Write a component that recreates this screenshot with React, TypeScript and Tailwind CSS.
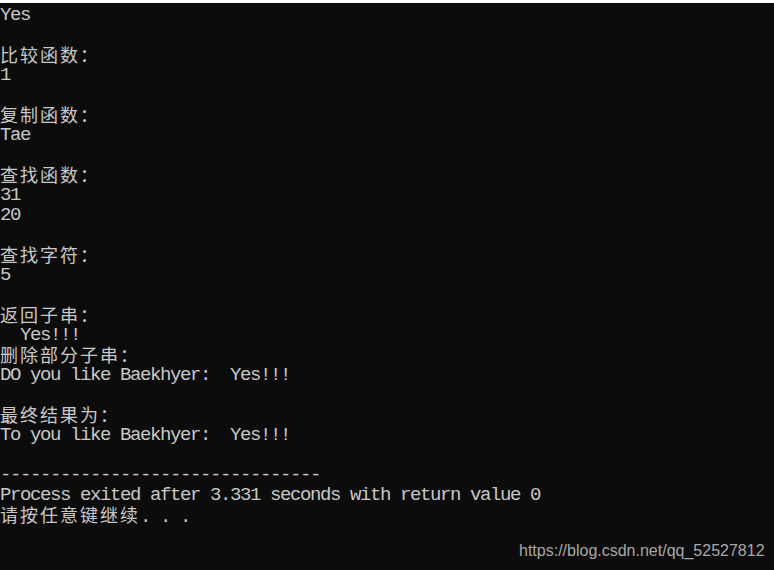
const lines = [
  'Yes',
  '',
  '比较函数：',
  '1',
  '',
  '复制函数：',
  'Tae',
  '',
  '查找函数：',
  '31',
  '20',
  '',
  '查找字符：',
  '5',
  '',
  '返回子串：',
  '  Yes!!!',
  '删除部分子串：',
  'DO you like Baekhyer:  Yes!!!',
  '',
  '最终结果为：',
  'To you like Baekhyer:  Yes!!!',
  '',
  '--------------------------------',
  'Process exited after 3.331 seconds with return value 0',
  '请按任意键继续. . .',
];

// console cells: ascii is one cell (10px), CJK takes two (20px)
function ConsoleLine({ text }: { text: string }) {
  const parts = text.split(/([\u3000-\u9fff\uff00-\uffef]+)/).filter((p) => p !== '');
  return (
    <div className="h-[20px] leading-[20px] whitespace-pre overflow-visible">
      {parts.map((part, i) =>
        /[\u3000-\u9fff\uff00-\uffef]/.test(part) ? (
          <span
            key={i}
            className="font-['Noto_Sans_CJK_SC',sans-serif] text-[18px] tracking-[2px] leading-[20px]"
          >
            {part}
          </span>
        ) : (
          <span
            key={i}
            className="font-['Liberation_Mono',monospace] text-[19px] tracking-[-1.4px] leading-[20px]"
          >
            {part}
          </span>
        )
      )}
    </div>
  );
}

export default function App() {
  return (
    <div className="relative w-[774px] h-[570px] bg-[#0c0c0c] overflow-hidden">
      <div className="h-[3px] bg-white" />
      <div className="pt-[1px] text-[#c8c8c8]">
        {lines.map((line, i) => (
          <ConsoleLine key={i} text={line} />
        ))}
      </div>
      {/* csdn watermark */}
      <div className="absolute left-[519px] top-[539px] font-['Liberation_Sans',Arial,sans-serif] text-[16px] text-[#a8a8a8]">
        https://blog.csdn.net/qq_52527812
      </div>
    </div>
  );
}
